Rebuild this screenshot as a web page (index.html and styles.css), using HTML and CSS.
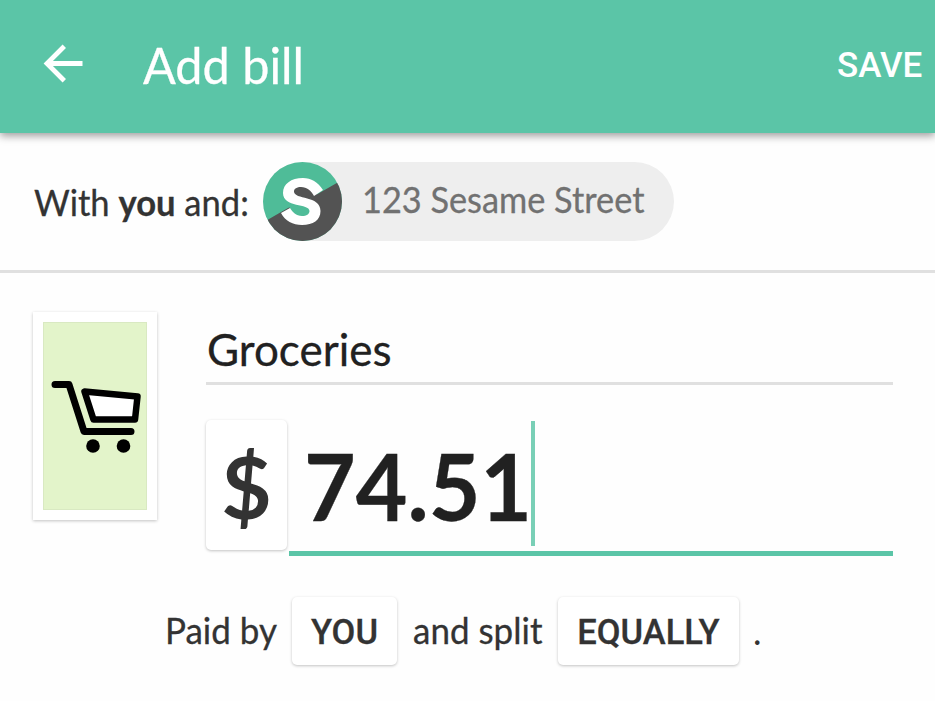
FILE: index.html
```html
<!DOCTYPE html>
<html lang="en">
<head>
<meta charset="utf-8">
<title>Add bill</title>
<link rel="stylesheet" href="styles.css">
</head>
<body>
<header class="bar">
  <svg class="back" width="40" height="40" viewBox="0 0 40 40"><path d="M39.500 19.500H5M21.300 2.200L4 19.500l17.300 17.300" fill="none" stroke="#fff" stroke-width="4.800"/></svg>
  <h1 class="title"><span>Add bill</span></h1>
  <span class="save">SAVE</span>
</header>
<section class="people">
  <div class="with"><span>With <b>you</b> and:</span></div>
  <div class="chip">
    <svg class="logo" width="79" height="79" viewBox="0 0 79 79">
      <defs><clipPath id="disc"><circle cx="39.500" cy="39.500" r="39.500"/></clipPath></defs>
      <g clip-path="url(#disc)">
        <path d="M0 0h79v79H0z" fill="#4fbc98"/>
        <path d="M79 18L52 33.500 45 38 25 46 0 60.500v18.500h79z" fill="#535353"/>
        <path d="M28 23h18l8 10-9 5-16-4z" fill="#535353"/>
        <path d="M26.500 45l6-4 17 3v12H30z" fill="#4fbc98"/>
        <path d="M60 28C55 20 48 16 40 16C28 16 20 22 20 31C20 46 46.500 41 46.500 49C46.500 52 43.500 54 39 54C33 54 29.500 50 27 46L18 51C22 59 30 63 39 63C50 63 57.500 58 57.500 49C57.500 33 31 38 31 29.500C31 26.500 34 25 38 25C44 25 48 28.500 51 34Z" fill="#fff"/>
      </g>
    </svg>
    <span class="name">123 Sesame Street</span>
  </div>
</section>
<main class="bill">
  <div class="category">
    <svg class="cart" width="104" height="188" viewBox="0 0 104 188" stroke="#000" stroke-linecap="round" stroke-linejoin="round">
      <path d="M12 62.500h14L41 109.500h47" fill="none" stroke-width="7"/>
      <path d="M41.500 69.500L94.500 74.500 92 97.500H50.500z" fill="#fff" stroke-width="6.500"/>
      <g stroke="none"><circle cx="50" cy="124" r="6.800"/><circle cx="80.500" cy="124" r="6.800"/></g>
    </svg>
  </div>
  <div class="fields">
    <div class="description"><span>Groceries</span></div>
    <div class="money">
      <div class="currency"><span>$</span></div>
      <div class="amount"><div class="value"><span>74.51</span></div><i class="caret"></i></div>
    </div>
  </div>
</main>
<footer class="split">
  <div class="paid"><span>Paid by</span></div>
  <span class="button you">YOU</span>
  <div class="and"><span>and split</span></div>
  <span class="button equally">EQUALLY</span>
  <span class="dot">.</span>
</footer>
</body>
</html>
```
FILE: styles.css
```css
* { box-sizing: border-box; }
body {
  margin: 0;
  height: 701px;
  overflow: hidden;
  background: #fefefe;
  color: #333;
  font-family: Lato, sans-serif;
  font-size: 36px;
  white-space: nowrap;
}
.title span, .with span, .name, .value span, .paid span, .and span {
  display: inline-block;
  transform-origin: 0 50%;
  -webkit-text-stroke: .3px;
}
.bar {
  display: flex;
  align-items: center;
  height: 133px;
  padding-left: 43px;
  background: #5bc5a7;
  color: #fff;
  box-shadow: 0 3px 8px rgba(0, 0, 0, .38);
}
.back { margin-bottom: 6px; }
.title { margin: 0 0 4px 60px; width: 694px; font-size: 50px; font-weight: 400; line-height: 60px; }
.title span { transform: scaleX(.972); }
.save { font: 500 35px/40px Roboto, sans-serif; margin-bottom: 2px; }
.people {
  display: flex;
  align-items: center;
  height: 140px;
  padding-left: 34px;
  border-bottom: 3px solid #e0e0e0;
}
.with { width: 229px; }
.with span { transform: scaleX(.96); }
.chip {
  display: flex;
  align-items: center;
  width: 411px;
  height: 79px;
  border-radius: 40px;
  background: #eee;
  color: #717171;
}
.name { margin-left: 20px; line-height: 44px; margin-bottom: 5px; transform: scaleX(.953); }
.bill { display: flex; padding: 39px 0 0 33px; height: 283px; }
.category {
  width: 124px;
  height: 208px;
  padding: 10px;
  background: #fff;
  box-shadow: 0 1px 3px rgba(0, 0, 0, .24);
}
.cart { display: block; background: #e3f4ca; outline: 1px solid #d9e9c2; outline-offset: -1px; }
.fields { width: 687px; margin-left: 49px; }
.description {
  height: 73px;
  padding: 11px 0 0 1px;
  border-bottom: 3px solid #e0e0e0;
  color: #212121;
  font-size: 44px;
  line-height: 53px;
  -webkit-text-stroke: .3px;
}
.money { display: flex; padding-top: 35px; }
.currency, .button {
  display: flex;
  align-items: center;
  justify-content: center;
  border-radius: 5px;
  background: #fff;
  box-shadow: 0 1px 3px rgba(0, 0, 0, .24);
}
.currency { width: 81px; height: 130px; margin-right: 2px; font-size: 87px; font-weight: 700; }
.amount {
  display: flex;
  width: 604px;
  height: 136px;
  padding-left: 15px;
  border-bottom: 5px solid #5bc5a7;
  color: #212121;
  font-size: 91px;
  font-weight: 700;
  line-height: 131px;
}
.value { width: 227px; }
.value span { transform: scaleX(.98); }
.caret { width: 4px; height: 125px; margin-top: 1px; background: #79cfb6; }
.split { display: flex; align-items: center; height: 68px; margin-top: 41px; padding-left: 165px; }
.paid { width: 127px; margin-bottom: 2px; }
.and { width: 145px; margin-bottom: 2px; }
.paid span, .and span { transform: scaleX(.972); }
.button { height: 68px; padding-top: 2px; font: 500 34.5px/42px Roboto, sans-serif; -webkit-text-stroke: .3px; }
.you { width: 105px; margin-right: 16px; }
.equally { width: 181px; margin-right: 14px; }
```
